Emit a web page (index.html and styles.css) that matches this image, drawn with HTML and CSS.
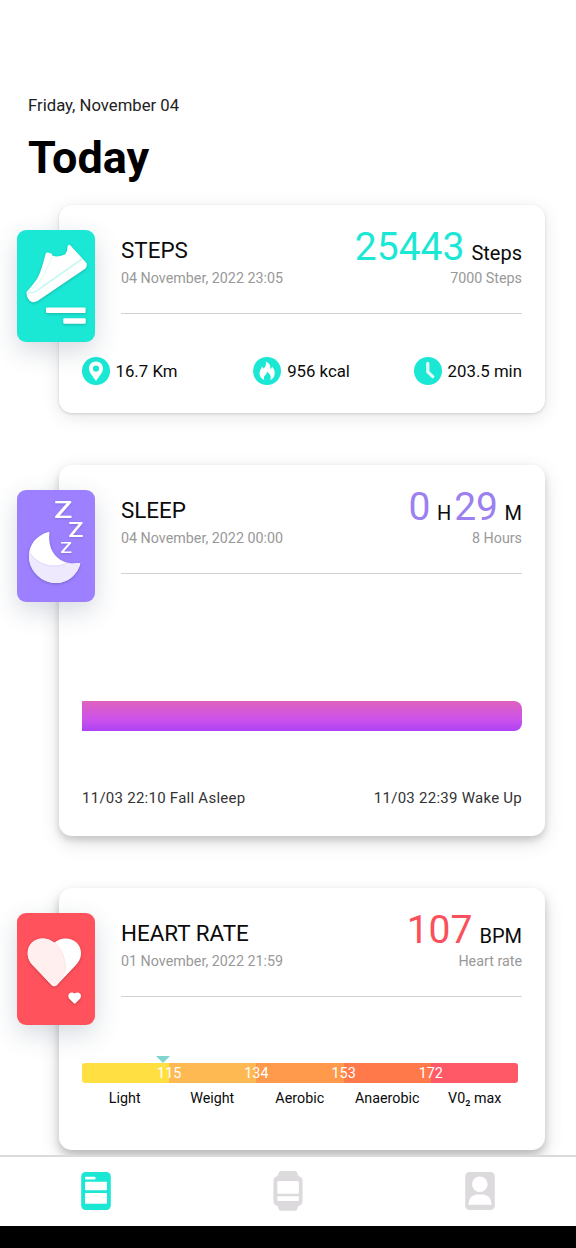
FILE: index.html
```html
<!DOCTYPE html>
<html lang="en">
<head>
<meta charset="utf-8">
<title>Today</title>
<link rel="stylesheet" href="styles.css">
</head>
<body>
<div class="screen">
  <main class="content">
    <p class="date">Friday, November 04</p>
    <h1 class="title">Today</h1>
    <div class="cards">
      <section class="card card-steps">
        <svg class="tile tile-steps" viewBox="0 0 78 112">
          <g class="lift">
            <path fill="#fff" d="M28.500 24Q29 22 31 22.600L34.800 23.800L35.500 25.800Q42 27.500 48 24.600Q50.500 22 50.500 17Q51 13.500 53.500 15.500L69.500 33Q70.500 36 68.500 38.500L20.500 71Q15.500 73.500 12.500 70.500Q9 67 9.500 62Q15 56 20 49Q24.500 41 28.500 24Z"/>
            <path fill="none" stroke="#c8f8f2" stroke-width="1.6" d="M10.500 62.500Q17 64 25 57L65 29"/>
            <path fill="none" stroke="#e4fbf8" stroke-width="1.200" d="M12 61Q20 56 27 45L35 27"/>
            <rect x="29" y="77.500" width="39.600" height="5.600" rx="1" fill="#fff"/>
            <rect x="46.300" y="88.300" width="22.400" height="5.400" rx="1" fill="#fff"/>
          </g>
        </svg>
        <div class="head">
          <div class="name"><h2>STEPS</h2><p>04 November, 2022 23:05</p></div>
          <div class="value"><div class="figure teal"><b>25443</b><span>Steps</span></div><p>7000 Steps</p></div>
        </div>
        <div class="stats">
          <div class="stat">
            <svg viewBox="0 0 28 28"><circle cx="14" cy="14" r="14" fill="#1be7d5"/><path fill="#fff" fill-rule="evenodd" d="M14 4.500C9.800 4.500 7 7.600 7 11.400C7 15.800 11 19 14 24C17 19 21 15.800 21 11.400C21 7.600 18.200 4.500 14 4.500ZM14 8.500A3.100 3.100 0 1 1 14 14.700A3.100 3.100 0 1 1 14 8.500Z"/></svg>
            <span>16.7 Km</span>
          </div>
          <div class="stat stat-energy">
            <svg viewBox="0 0 28 28"><circle cx="14" cy="14" r="14" fill="#1be7d5"/><path fill="#fff" d="M12.800 4.500C16.500 6 17.800 9 17.300 12C18.500 11.800 19 10.600 19 9.600C21.300 12 22.300 15 21.500 18C20.900 20.500 19.500 22.200 17.300 23C18.600 20 17.200 16.800 14 14.500C14.200 17.500 10.800 18.500 10.800 21C10.800 21.800 11.100 22.500 11.500 23.200C8.500 22 6.500 19.500 6.500 16.500C6.500 13.500 8.300 12 9 9.500C9.800 10 10.300 10.800 10.500 11.700C12.600 10 13.500 7.500 12.800 4.500Z"/></svg>
            <span>956 kcal</span>
          </div>
          <div class="stat">
            <svg viewBox="0 0 28 28"><circle cx="14" cy="14" r="14" fill="#1be7d5"/><path fill="none" stroke="#fff" stroke-opacity=".88" stroke-width="3.200" stroke-linecap="round" stroke-linejoin="round" d="M13.800 6.300V14.800L18.800 19.600"/></svg>
            <span>203.5 min</span>
          </div>
        </div>
      </section>

      <section class="card card-sleep">
        <svg class="tile tile-sleep" viewBox="0 0 78 112">
          <defs><clipPath id="moon"><path d="M31.300 42C16 46.500 8.500 60 13.500 75C20 92 41 99 55 87Q61.500 81 63.200 73.800Q63.400 72.600 61.800 73C46 76 30 65 32.400 43.200Q32.500 41.600 31.300 42Z"/></clipPath></defs>
          <g class="lift"><g clip-path="url(#moon)">
            <rect width="78" height="112" fill="#fff"/>
            <path fill="#efe9fd" d="M10 61Q22 78 41 76L66 72V98H10Z"/>
            <path fill="none" stroke="#ddd2fb" stroke-width="1" d="M11 61Q22 78 41 76L52 73"/>
          </g></g>
          <g class="zzz">
            <text x="37" y="27.500" font-size="23" textLength="18.500" lengthAdjust="spacingAndGlyphs">Z</text>
            <text x="51.300" y="47" font-size="19.500" textLength="15.300" lengthAdjust="spacingAndGlyphs">Z</text>
            <text x="43.200" y="62.600" font-size="15.500" textLength="11.800" lengthAdjust="spacingAndGlyphs">Z</text>
          </g>
        </svg>
        <div class="head">
          <div class="name"><h2>SLEEP</h2><p>04 November, 2022 00:00</p></div>
          <div class="value"><div class="figure violet"><b>0</b><span>H</span><b class="minutes">29</b><span>M</span></div><p>8 Hours</p></div>
        </div>
        <div class="sleep-bar"></div>
        <div class="sleep-times"><span>11/03 22:10 Fall Asleep</span><span>11/03 22:39 Wake Up</span></div>
      </section>

      <section class="card card-heart">
        <svg class="tile tile-heart" viewBox="0 0 78 112">
          <g class="lift">
            <path fill="#fff" d="M37.300 29.700C47 21 64 26 64 40C64 46 61 50 57.500 53.500L40 72Q37.300 74.500 34.600 72L17 53.500C13 49.500 10.700 46 10.700 40C10.700 26 27 21 37.300 29.700Z"/>
            <path fill="#ffefef" d="M37.300 29.700Q48 38 48.500 54Q48 60 40 72Q37.300 74.500 34.600 72L17 53.500C13 49.500 10.700 46 10.700 40C10.700 26 27 21 37.300 29.700Z"/>
            <path fill="none" stroke="#ffdfe1" stroke-width=".8" d="M37.300 29.700Q48 38 48.500 54Q48 60 42 69"/>
            <path fill="#fff" d="M57.700 80.600C60 78.400 64 79.500 64 83C64 85 62.800 86 61.500 87.300L58.500 90.300Q57.700 91 56.900 90.300L53.800 87.300C52.500 86 51.300 85 51.300 83C51.300 79.500 55.300 78.400 57.700 80.600Z"/>
          </g>
        </svg>
        <div class="head">
          <div class="name"><h2>HEART RATE</h2><p>01 November, 2022 21:59</p></div>
          <div class="value"><div class="figure coral"><b>107</b><span>BPM</span></div><p>Heart rate</p></div>
        </div>
        <div class="zones">
          <svg class="marker" viewBox="0 0 14 7"><path fill="#80d5cf" d="M0 0H14L7 7Z"/></svg>
          <div class="zone-bar">
            <i class="z1"></i><i class="z2"><em>115</em></i><i class="z3"><em>134</em></i><i class="z4"><em>153</em></i><i class="z5"><em>172</em></i>
          </div>
          <div class="zone-names"><span>Light</span><span>Weight</span><span>Aerobic</span><span>Anaerobic</span><span>V0₂ max</span></div>
        </div>
      </section>
    </div>
  </main>
  <nav class="tabs">
    <span class="tab"><svg viewBox="0 0 30 40"><rect x=".2" y="1" width="29.600" height="38" rx="4.500" fill="#1be7d5"/><g fill="#fff"><rect x="4" y="5.800" width="10.500" height="2.600" rx="1"/><rect x="4" y="10.800" width="22" height="8.400" rx=".8"/><rect x="4" y="22" width="22" height="10.800" rx=".8"/></g></svg></span>
    <span class="tab"><svg viewBox="0 0 30 40"><path fill="#dddadd" d="M8 0H22Q24 0 24.500 2.500L25.500 5Q29.600 6 29.600 10V30Q29.600 34 25.500 35L24.500 37.500Q24 39.700 22 39.700H8Q6 39.700 5.500 37.500L4.500 35Q.4 34 .4 30V10Q.4 6 4.500 5L5.500 2.500Q6 0 8 0Z"/><rect x="4.300" y="10" width="21.500" height="12.800" rx="1" fill="#fff"/><rect x="4.300" y="25.200" width="21.500" height="4.900" rx="1" fill="#fff"/></svg></span>
    <span class="tab"><svg viewBox="0 0 30 40"><rect x=".2" y="1" width="29.600" height="38" rx="4.500" fill="#dddadd"/><circle cx="14.800" cy="13.300" r="7.800" fill="#fff"/><path fill="#fff" d="M3.500 33.800C3.500 27 8 23.500 12 23.500H18C22 23.500 26.500 27 26.500 33.800Z"/></svg></span>
  </nav>
  <div class="system-bar"></div>
</div>
</body>
</html>
```

FILE: styles.css
```css
* { box-sizing: border-box; }
body {
  margin: 0;
  background: #fff;
  color: #0b0b0b;
  font-family: Roboto, "Liberation Sans", sans-serif;
}
h1, h2, p { margin: 0; font-weight: 400; }
i, em { font-style: normal; }
svg { display: block; flex: none; }

.screen { display: flex; flex-direction: column; width: 576px; height: 1248px; overflow: hidden; }
.content { flex: 1; min-height: 0; overflow: hidden; padding-top: 94px; }
.date { padding-left: 28px; font-size: 16.700px; line-height: 24px; color: #222; }
.title { padding: 10px 0 0 28px; height: 87px; font-size: 45px; line-height: 60px; font-weight: 700; color: #000; }

.cards { display: flex; flex-direction: column; gap: 52px; padding: 0 31px 0 59px; }
.card { position: relative; flex: none; padding: 29px 23px 0; border-radius: 13px; background: #fff; }
.card-steps { height: 208px; box-shadow: 0 1px 3px rgba(0,0,0,.14), 0 4px 18px rgba(0,0,0,.1); }
.card-sleep { height: 371px; box-shadow: 0 4px 7px rgba(0,0,0,.15), 0 6px 20px rgba(0,0,0,.13); }
.card-heart { height: 262px; box-shadow: 0 5px 8px rgba(0,0,0,.18), 0 8px 20px rgba(0,0,0,.14); }

.tile { position: absolute; left: -42px; top: 25.400px; width: 78px; height: 112px; border-radius: 9px; box-shadow: 0 9px 26px rgba(50,70,100,.2); }
.tile-steps { background: #1be7d5; }
.tile-sleep { background: #9c80ff; }
.tile-heart { background: #ff525c; }
.lift { filter: drop-shadow(0 1.500px 1.500px rgba(0,0,0,.2)); }
.zzz { fill: #fff; font-family: Roboto, sans-serif; font-weight: 500; filter: drop-shadow(0 1px 1px rgba(0,0,0,.15)); }

.head { display: flex; justify-content: space-between; height: 80px; margin-left: 39px; border-bottom: 1.500px solid #d2d2d2; }
.name h2 { font-size: 22.400px; line-height: 32px; }
.name p, .value p { font-size: 14.300px; line-height: 20px; color: #999; }
.name p { margin-top: 2px; }
.value { text-align: right; margin-top: -3px; }
.value p { margin-top: 5px; }
.figure { display: flex; align-items: baseline; justify-content: flex-end; height: 32px; }
.figure b { font-size: 39px; line-height: 32px; font-weight: 400; }
.figure span { margin-left: 7px; font-size: 20px; line-height: 20px; }
.figure .minutes { margin-left: 3px; }
.teal b { color: #1be7d5; }
.violet b { color: #9c80f0; }
.violet span { margin-left: 6.500px; }
.coral b { color: #fa505c; }

.stats { display: flex; justify-content: space-between; padding-top: 43px; }
.stat { display: flex; align-items: center; gap: 6px; font-size: 16.800px; line-height: 28px; }
.stat:first-child { margin-left: -.5px; }
.stat-energy { margin-left: 12px; }
.stat svg { width: 28px; height: 28px; }

.sleep-bar { height: 30px; margin-top: 127px; border-radius: 0 8px 8px 0; background: linear-gradient(#df62bd, #cb52eb 62%, #ae42f6); }
.sleep-times { display: flex; justify-content: space-between; margin-top: 57px; font-size: 15px; letter-spacing: .26px; line-height: 20px; color: #333; }

.zones { width: 436px; padding-top: 59px; }
.marker { width: 14px; height: 7px; margin-left: 73.500px; }
.zone-bar { display: grid; grid-template-columns: repeat(5, 1fr); height: 20px; border-radius: 3px; overflow: hidden; color: #fff; font-size: 14.400px; line-height: 21px; }
.zone-bar em { display: block; width: 40px; margin-left: -20px; text-align: center; }
.z1 { background: #ffdf42; }
.z2 { background: #ffb953; }
.z3 { background: #ff994b; }
.z4 { background: #ff794a; }
.z5 { background: #ff5967; }
.zone-names { display: grid; grid-template-columns: repeat(5, 87.500px); margin-left: -1px; padding-top: 5px; font-size: 14.300px; line-height: 20px; text-align: center; }

.tabs { flex: none; display: grid; grid-template-columns: repeat(3, 1fr); justify-items: center; height: 71px; padding-top: 14px; border-top: 2px solid #dadada; background: #fff; }
.tab svg { width: 30px; height: 40px; }
.system-bar { flex: none; height: 22px; background: #000; }
```
